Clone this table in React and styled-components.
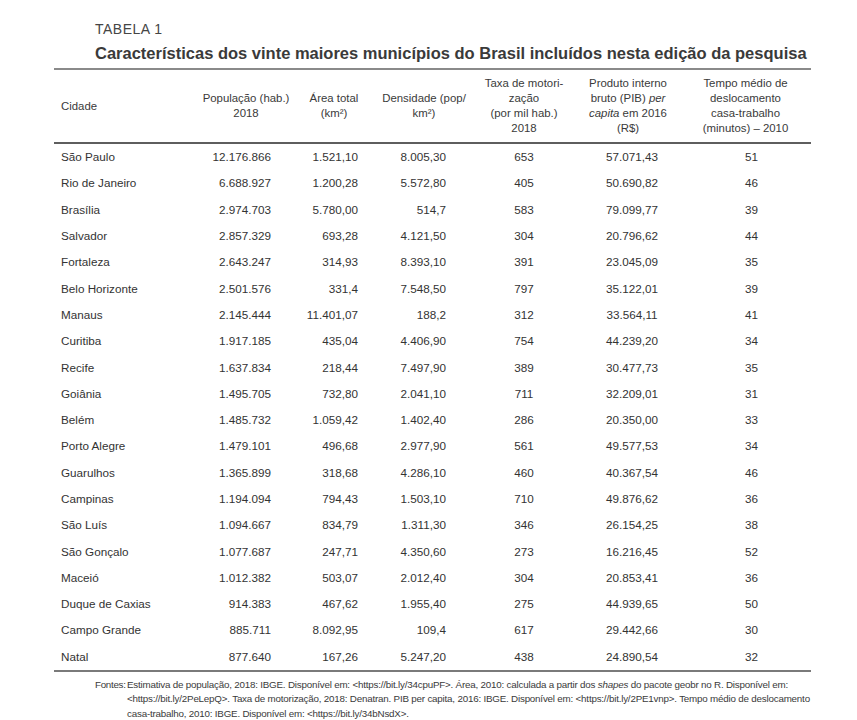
import React from "react";
import styled, { createGlobalStyle } from "styled-components";

const GlobalStyle = createGlobalStyle`
  html, body { margin: 0; padding: 0; background: #ffffff; }
  body {
    font-family: "Liberation Sans", Arial, sans-serif;
    color: #3a3a3a;
  }
`;

const Page = styled.div`
  padding: 20px 0 0 54px;
  width: 757px;
`;

const Caption = styled.div`
  padding-left: 41px;
  margin-bottom: 4px;
`;

const Label = styled.div`
  font-size: 14px;
  line-height: 18px;
  letter-spacing: 0.5px;
  color: #454545;
  margin-bottom: 4px;
`;

const Title = styled.h1`
  margin: 0;
  font-size: 16.5px;
  line-height: 22px;
  font-weight: 700;
  color: #3a3a3a;
  white-space: nowrap;
`;

const Table = styled.div`
  border-top: 2px solid #8a8a8a;
  border-bottom: 2px solid #7a7a7a;
`;

const COLS = "154px 76px 100px 80px 120px 96px 131px";

const HeaderRow = styled.div`
  display: grid;
  grid-template-columns: ${COLS};
  height: 72px;
  border-bottom: 2px solid #5e5e5e;
`;

const HeadCell = styled.div`
  display: flex;
  flex-direction: column;
  justify-content: center;
  align-items: ${(p) => (p.$align === "left" ? "flex-start" : "center")};
  text-align: ${(p) => p.$align || "center"};
  padding-left: ${(p) => p.$pl || 0}px;
  padding-right: ${(p) => p.$pr || 0}px;
  font-size: 11.4px;
  line-height: 15px;
  color: #3a3a3a;
  white-space: nowrap;
`;

const Row = styled.div`
  display: grid;
  grid-template-columns: ${COLS};
  height: 26.3px;
  align-items: center;
`;

const Cell = styled.div`
  text-align: ${(p) => p.$align};
  padding-left: ${(p) => p.$pl || 0}px;
  padding-right: ${(p) => p.$pr || 0}px;
  font-size: 11.7px;
  line-height: 16px;
  color: #333;
  white-space: nowrap;
`;

const Notes = styled.div`
  display: flex;
  padding-left: 41px;
  margin-top: 6px;
  font-size: 9.8px;
  line-height: 14.5px;
  letter-spacing: -0.2px;
  color: #3a3a3a;
`;

const NoteLabel = styled.div`
  width: 32px;
  flex: none;
  letter-spacing: -0.3px;
  white-space: nowrap;
`;

const NoteText = styled.div`
  white-space: nowrap;
`;

const columns = [
  { align: "left", pl: 7, hAlign: "left", hpl: 7 },
  { align: "right", pr: 13 },
  { align: "right", pr: 26 },
  { align: "right", pr: 18 },
  { align: "center" },
  { align: "center", hpr: 8 },
  { align: "center", pl: 12 },
];

const headers = [
  ["Cidade"],
  ["População (hab.)", "2018"],
  ["Área total", "(km²)"],
  ["Densidade (pop/", "km²)"],
  ["Taxa de motori-", "zação", "(por mil hab.)", "2018"],
  [
    "Produto interno",
    <>bruto (PIB) <i>per</i></>,
    <><i>capita</i> em 2016</>,
    "(R$)",
  ],
  ["Tempo médio de", "deslocamento", "casa-trabalho", "(minutos) – 2010"],
];

const data = [
  ["São Paulo", "12.176.866", "1.521,10", "8.005,30", "653", "57.071,43", "51"],
  ["Rio de Janeiro", "6.688.927", "1.200,28", "5.572,80", "405", "50.690,82", "46"],
  ["Brasília", "2.974.703", "5.780,00", "514,7", "583", "79.099,77", "39"],
  ["Salvador", "2.857.329", "693,28", "4.121,50", "304", "20.796,62", "44"],
  ["Fortaleza", "2.643.247", "314,93", "8.393,10", "391", "23.045,09", "35"],
  ["Belo Horizonte", "2.501.576", "331,4", "7.548,50", "797", "35.122,01", "39"],
  ["Manaus", "2.145.444", "11.401,07", "188,2", "312", "33.564,11", "41"],
  ["Curitiba", "1.917.185", "435,04", "4.406,90", "754", "44.239,20", "34"],
  ["Recife", "1.637.834", "218,44", "7.497,90", "389", "30.477,73", "35"],
  ["Goiânia", "1.495.705", "732,80", "2.041,10", "711", "32.209,01", "31"],
  ["Belém", "1.485.732", "1.059,42", "1.402,40", "286", "20.350,00", "33"],
  ["Porto Alegre", "1.479.101", "496,68", "2.977,90", "561", "49.577,53", "34"],
  ["Guarulhos", "1.365.899", "318,68", "4.286,10", "460", "40.367,54", "46"],
  ["Campinas", "1.194.094", "794,43", "1.503,10", "710", "49.876,62", "36"],
  ["São Luís", "1.094.667", "834,79", "1.311,30", "346", "26.154,25", "38"],
  ["São Gonçalo", "1.077.687", "247,71", "4.350,60", "273", "16.216,45", "52"],
  ["Maceió", "1.012.382", "503,07", "2.012,40", "304", "20.853,41", "36"],
  ["Duque de Caxias", "914.383", "467,62", "1.955,40", "275", "44.939,65", "50"],
  ["Campo Grande", "885.711", "8.092,95", "109,4", "617", "29.442,66", "30"],
  ["Natal", "877.640", "167,26", "5.247,20", "438", "24.890,54", "32"],
];

export default function App() {
  return (
    <>
      <GlobalStyle />
      <Page>
        <Caption>
          <Label>TABELA 1</Label>
          <Title>
            Características dos vinte maiores municípios do Brasil incluídos nesta edição da pesquisa
          </Title>
        </Caption>
        <Table>
          <HeaderRow>
            {headers.map((lines, i) => (
              <HeadCell
                key={i}
                $align={columns[i].hAlign || "center"}
                $pl={columns[i].hpl}
                $pr={columns[i].hpr}
              >
                {lines.map((l, j) => (
                  <span key={j}>{l}</span>
                ))}
              </HeadCell>
            ))}
          </HeaderRow>
          {data.map((row) => (
            <Row key={row[0]}>
              {row.map((v, i) => (
                <Cell
                  key={i}
                  $align={columns[i].align}
                  $pl={columns[i].pl}
                  $pr={columns[i].pr}
                >
                  {v}
                </Cell>
              ))}
            </Row>
          ))}
        </Table>
        <Notes>
          <NoteLabel>Fontes:</NoteLabel>
          <NoteText>
            Estimativa de população, 2018: IBGE. Disponível em: &lt;https://bit.ly/34cpuPF&gt;. Área, 2010: calculada a partir dos <i>shapes</i> do pacote geobr no R. Disponível em:
            <br />
            &lt;https://bit.ly/2PeLepQ&gt;. Taxa de motorização, 2018: Denatran. PIB per capita, 2016: IBGE. Disponível em: &lt;https://bit.ly/2PE1vnp&gt;. Tempo médio de deslocamento
            <br />
            casa-trabalho, 2010: IBGE. Disponível em: &lt;https://bit.ly/34bNsdX&gt;.
          </NoteText>
        </Notes>
      </Page>
    </>
  );
}
